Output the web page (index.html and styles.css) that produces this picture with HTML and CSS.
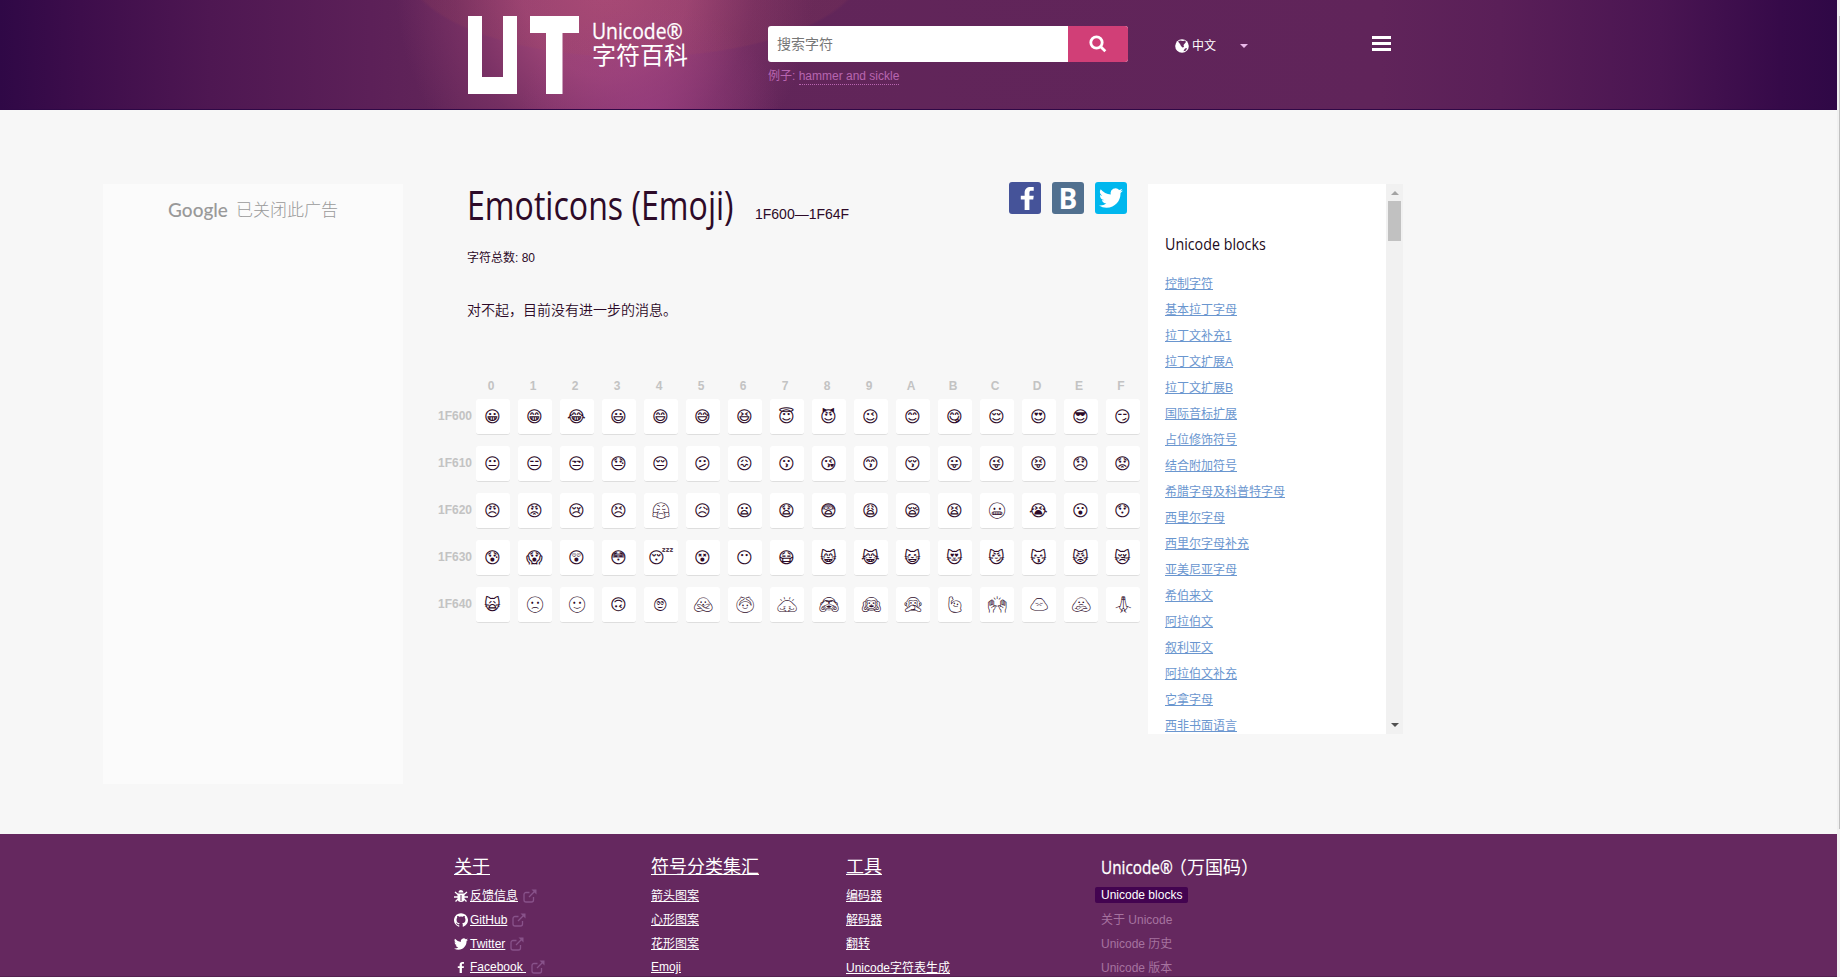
FILE: index.html
```html
<!DOCTYPE html>
<html lang="zh">
<head>
<meta charset="utf-8">
<title>Emoticons (Emoji)</title>
<link rel="stylesheet" href="styles.css">
</head>
<body>
<svg class="defs" width="0" height="0">
  <symbol id="i-ext" viewBox="0 0 14 14"><path d="M6.500 3.500H3A2 2 0 0 0 1 5.500V11A2 2 0 0 0 3 13H8.500A2 2 0 0 0 10.500 11V8M6 8L12 2" fill="none" stroke="currentColor" stroke-width="1.3"/><path d="M8.500 .5H13.500V5.500Z" fill="currentColor"/></symbol>
  <symbol id="i-bird" viewBox="0 0 24 24"><path fill="currentColor" d="M24 4.6a10 10 0 0 1-2.8.8 5 5 0 0 0 2.1-2.7 10 10 0 0 1-3.1 1.2 4.9 4.9 0 0 0-8.4 4.5A14 14 0 0 1 1.700 3.200a4.900 4.900 0 0 0 1.500 6.500 5 5 0 0 1-2.200-.6 4.900 4.900 0 0 0 4 4.900 5 5 0 0 1-2.200.1 4.900 4.900 0 0 0 4.600 3.400A10 10 0 0 1 0 19.500 14 14 0 0 0 7.500 21.700c9.100 0 14.300-7.700 14-14.600A10 10 0 0 0 24 4.600z"/></symbol>
  <symbol id="i-f" viewBox="0 0 14 24"><path fill="currentColor" d="M4 24V13H0V9H4V6C4 2 6.500 0 10 0H13.500V4H11C9.500 4 9 4.700 9 6V9H13.500L13 13H9V24Z"/></symbol>
</svg>
<div class="shell">
  <div class="page">
    <header class="top">
      <div class="bar">
        <svg class="logo" width="111" height="78" viewBox="0 0 111 78" fill="#fff"><path d="M0 0H14V61H35V0H49V78H0ZM62 0H111V17H94.500V78H78V17H62Z"/></svg>
        <div class="brand"><span class="cond brand-en">Unicode®</span><span>字符百科</span></div>
        <div class="search">
          <div class="field"><span class="input">搜索字符</span><span class="go"><svg width="18" height="18" viewBox="0 0 18 18" fill="none" stroke="#fff" stroke-width="2.800"><circle cx="7.500" cy="7.500" r="5.700"/><path d="M11.500 11.500L16.300 16.300"/></svg></span></div>
          <p class="hint">例子: <a>hammer and sickle</a></p>
        </div>
        <div class="lang">
          <svg width="14" height="14" viewBox="0 0 14 14"><circle cx="7" cy="7" r="6.800" fill="#fff"/><path fill="#65285f" d="M3 2.500L5 1.500 8 2 10 1.500 11 3 8.500 6 9 8 7.500 8.500 6 7 5 5ZM10 9.500L12 9 11 11.500 8.500 12.300 9 11Z"/></svg>
          <span>中文</span><i class="caret"></i>
        </div>
        <div class="burger"><i></i><i></i><i></i></div>
      </div>
    </header>

    <main class="main">
      <aside class="ad"><span class="google">Google</span><span>已关闭此广告</span></aside>
      <section class="content">
        <div class="titlebar">
          <h1 class="cond">Emoticons (Emoji)</h1><span class="range">1F600—1F64F</span>
          <div class="social">
            <span class="fb"><svg width="15" height="23"><use href="#i-f"/></svg></span>
            <span class="vk">B</span>
            <span class="tw"><svg width="24" height="24"><use href="#i-bird"/></svg></span>
          </div>
        </div>
        <p class="count">字符总数: 80</p>
        <p class="note">对不起，目前没有进一步的消息。</p>
        <div class="grid" id="grid"></div>
      </section>
      <aside class="side">
        <div class="list">
          <h2 class="cond">Unicode blocks</h2>
          <a>控制字符</a><a>基本拉丁字母</a><a>拉丁文补充1</a><a>拉丁文扩展A</a><a>拉丁文扩展B</a><a>国际音标扩展</a><a>占位修饰符号</a><a>结合附加符号</a><a>希腊字母及科普特字母</a><a>西里尔字母</a><a>西里尔字母补充</a><a>亚美尼亚字母</a><a>希伯来文</a><a>阿拉伯文</a><a>叙利亚文</a><a>阿拉伯文补充</a><a>它拿字母</a><a>西非书面语言</a>
        </div>
        <div class="scroll"><i class="up"></i><i class="thumb"></i><i class="down"></i></div>
      </aside>
    </main>

    <footer class="foot">
      <div class="col c1">
        <h3><a>关于</a></h3>
        <p><svg class="ic" viewBox="0 0 14 14"><path d="M4.500 3.500a2.500 2.500 0 0 1 5 0zM3.500 4.500h7v5a3.500 3.500 0 0 1-7 0z" fill="#fff"/><path d="M1 3l3 2.500M13 3l-3 2.500M0 8h14M1.500 12.500L4 10M12.500 12.500L10 10" stroke="#fff" stroke-width="1.300"/><path d="M7 6v6" stroke="#65285f"/></svg><a>反馈信息</a><svg class="ext"><use href="#i-ext"/></svg></p>
        <p><svg class="ic" viewBox="0 0 16 16"><path fill="#fff" d="M8 .2a8 8 0 0 0-2.500 15.600c.4 0 .5-.2.5-.4v-1.500c-2.200.5-2.700-1-2.700-1-.4-.9-.9-1.200-.9-1.200-.7-.5.1-.5.1-.5.800.1 1.200.8 1.200.8.700 1.300 1.900.9 2.300.7.100-.5.300-.9.500-1.100-1.800-.2-3.600-.9-3.600-4 0-.9.300-1.600.8-2.100-.1-.2-.4-1 .1-2.100 0 0 .7-.2 2.200.8a7.500 7.500 0 0 1 4 0c1.500-1 2.200-.8 2.200-.8.400 1.100.2 1.900.1 2.100.5.600.8 1.300.8 2.100 0 3.100-1.900 3.700-3.700 3.900.3.300.6.800.6 1.500v2.400c0 .2.100.5.500.4A8 8 0 0 0 8 .2z"/></svg><a>GitHub</a><svg class="ext"><use href="#i-ext"/></svg></p>
        <p><svg class="ic bird"><use href="#i-bird"/></svg><a>Twitter</a><svg class="ext"><use href="#i-ext"/></svg></p>
        <p class="last"><svg class="ic f"><use href="#i-f"/></svg><a>Facebook&nbsp;</a><svg class="ext"><use href="#i-ext"/></svg></p>
      </div>
      <div class="col c2"><h3><a>符号分类集汇</a></h3><p><a>箭头图案</a></p><p><a>心形图案</a></p><p><a>花形图案</a></p><p class="last"><a>Emoji</a></p></div>
      <div class="col c3"><h3><a>工具</a></h3><p><a>编码器</a></p><p><a>解码器</a></p><p><a>翻转</a></p><p><a>Unicode字符表生成</a></p></div>
      <div class="col c4"><h3><span class="cond foot-en">Unicode®</span><span>（万国码）</span></h3><p><b>Unicode blocks</b></p><p>关于 Unicode</p><p>Unicode 历史</p><p>Unicode 版本</p></div>
    </footer>
  </div>
  <div class="gutter"><i></i></div>
</div>
<script src="grid.js"></script>
</body>
</html>
```
FILE: styles.css
```css
* { box-sizing: border-box; }
html, body { margin: 0; height: 977px; overflow: hidden; }
body { background: #f7f7f7; color: #2d0a28; font: 12px/18px "Liberation Sans", "Noto Sans CJK SC", sans-serif; }
h1, h2, h3, p { margin: 0; font-weight: 400; }
i { display: block; }
.defs { position: absolute; }
.cond { font-family: "Open Sans", "Noto Sans CJK SC", sans-serif; display: inline-block; white-space: nowrap; transform-origin: 0 50%; }
.shell { display: flex; height: 977px; }
.page { width: 1837px; display: flex; flex-direction: column; }
.gutter { width: 3px; background: #f1f1f1; padding: 16px 0 0 2px; }
.gutter i { width: 1px; height: 813px; background: #c1c1c1; }

.top {
  height: 110px; flex: none; border-bottom: 1px solid #2f0846;
  background:
    radial-gradient(ellipse 230px 90px at 635px -32px, rgba(180,80,80,.1) 98%, transparent 100%),
    radial-gradient(ellipse 130px 110px at 650px 115px, rgba(160,64,135,.6) 0%, transparent 100%),
    radial-gradient(ellipse 210px 240px at 605px -20px, rgba(180,80,128,.85) 0%, rgba(172,76,126,.75) 40%, rgba(145,60,112,.4) 72%, transparent 100%),
    linear-gradient(90deg, #2f0846 0, #3d0d4b 80px, #4e1752 210px, #5c2058 370px, #622659 460px, #60245a 1380px, #5a1f58 1500px, #4a1552 1660px, #360a49 1780px, #2f0846 1837px);
}
.bar { display: flex; padding-left: 468px; height: 109px; }
.logo { margin-top: 16px; }
.brand { width: 96px; margin: 18px 0 0 13px; color: #fff; font-size: 24px; line-height: 25px; white-space: nowrap; display: flex; flex-direction: column; }
.brand-en { font-size: 22px; transform: scaleX(.88); width: 96px; -webkit-text-stroke: .3px #fff; }
.search { margin: 26px 0 0 80px; width: 360px; }
.field { display: flex; height: 36px; border-radius: 3px; overflow: hidden; background: #fff; }
.input { width: 300px; padding-left: 9px; font-size: 14px; line-height: 36px; color: #777; }
.go { width: 60px; background: #d13f77; display: grid; place-items: center; }
.hint { color: #b865b0; margin-top: 5px; }
.hint a { border-bottom: 1px dotted #b865b0; display: inline-block; line-height: 15px; }
.lang { display: flex; align-items: center; height: 18px; margin: 37px 0 0 47px; width: 74px; color: #fff; gap: 3px; flex: none; }
.caret { border: 4px solid transparent; border-top-color: #eab9ea; border-bottom: 0; margin-left: 21px; }
.burger { margin: 36px 0 0 123px; display: grid; gap: 3px; align-content: start; }
.burger i { width: 19px; height: 3px; background: #fff; }

.main { display: flex; height: 724px; flex: none; }
.ad { width: 300px; height: 600px; margin: 74px 0 0 103px; background: #fbfbfb; color: #999; font-size: 17px; line-height: 53px; text-align: center; font-weight: 300; display: flex; justify-content: center; gap: 8px; }
.google { font: 500 19px/52px Lato, sans-serif; }
.content { width: 710px; margin-left: 35px; padding-top: 72px; }
.titlebar { display: flex; height: 46px; padding-left: 29px; }
h1 { font-size: 40px; line-height: 45px; transform: scaleX(.803); width: 288px; }
.range { font-size: 14px; line-height: 18px; margin-top: 23px; }
.social { display: flex; gap: 11px; margin-left: auto; padding-right: 21px; }
.social span { width: 32px; height: 32px; border-radius: 3px; color: #fff; }
.fb { background: #455399; padding: 5px 0 0 11px; }
.vk { background: #51708f; font: bold 28px/32px "Open Sans", sans-serif; text-align: center; }
.tw { background: #00b7ee; padding: 4px; }
.social svg { display: block; }
.count { margin: 21px 0 0 29px; }
.note { margin: 33px 0 0 29px; font-size: 14px; line-height: 20px; font-weight: 350; }
.grid { margin-top: 58px; display: grid; grid-template-columns: 38px repeat(16, 34px); column-gap: 8px; row-gap: 11px; margin-left: -8px; }
.grid b { color: #c3c3c3; line-height: 17px; }
.grid .colh { text-align: center; padding-right: 4px; margin-bottom: -7px; }
.grid .rowh { line-height: 34px; padding-left: 8px; }
.grid .corner { height: 17px; margin-bottom: -7px; }
.cell { width: 34px; height: 36px; background: #fff; border-radius: 3px; border-bottom: 1px solid #dedede; font: 16px/33px Symbola, "Noto Sans CJK SC", sans-serif; text-align: center; padding-right: 1px; }

.side { width: 255px; height: 550px; margin: 74px 0 0 0; display: flex; background: #fff; overflow: hidden; }
.list { width: 238px; padding: 49px 0 0 17px; }
.list h2 { font-size: 17px; line-height: 22px; transform: scaleX(.84); width: 130px; margin-bottom: 20px; color: #1c0a20; display: block; }
.list a { display: block; line-height: 18px; margin-bottom: 8px; color: #6a96cf; text-decoration: underline; }
.scroll { width: 17px; background: #f1f1f1; display: flex; flex-direction: column; align-items: center; }
.up { border: 4px solid transparent; border-top: 0; border-bottom-color: #a3a3a3; margin: 7px 0 6px; }
.thumb { width: 13px; height: 40px; background: #c1c1c1; }
.down { border: 4px solid transparent; border-bottom: 0; border-top-color: #505050; margin: auto 0 7px; }

.foot { flex: none; height: 143px; overflow: hidden; background: #65285f; border-bottom: 1px solid #532150; color: #a6739f; display: flex; padding: 20px 0 0 454px; white-space: nowrap; }
.col { width: 196px; }
.c2 { padding-left: 1px; }
.c3 { width: 255px; }
.foot a { color: #fff; text-decoration: underline; }
.foot h3 { font-size: 18px; line-height: 26px; color: #fff; margin-bottom: 4px; }
.foot .c4 h3 { margin-bottom: 3px; }
.foot p { height: 24px; line-height: 20px; display: flex; align-items: center; }
.foot p.last { margin-top: -1px; }
.foot b { background: #430350; color: #fff; font-weight: 400; line-height: 16px; padding: 0 6px; margin: -2px 0 0 -6px; border-radius: 2px; }
.foot-en { transform: scaleX(.85); width: 68px; -webkit-text-stroke: .3px #fff; }
.ic { width: 14px; height: 14px; color: #fff; margin-right: 2px; }
.ic.f { height: 11px; }
.ext { width: 14px; height: 14px; margin-left: 5px; color: #88528a; }
```
FILE: grid.js
```js
const grid = document.getElementById('grid');
const add = (tag, cls, text) => {
  const el = document.createElement(tag);
  el.className = cls;
  el.textContent = text;
  grid.append(el);
};
add('b', 'corner', '');
for (let c = 0; c < 16; c++) add('b', 'colh', c.toString(16).toUpperCase());
for (let r = 0; r < 5; r++) {
  const base = 0x1f600 + r * 16;
  add('b', 'rowh', base.toString(16).toUpperCase());
  for (let c = 0; c < 16; c++) add('span', 'cell', String.fromCodePoint(base + c) + '\uFE0E');
}
```
